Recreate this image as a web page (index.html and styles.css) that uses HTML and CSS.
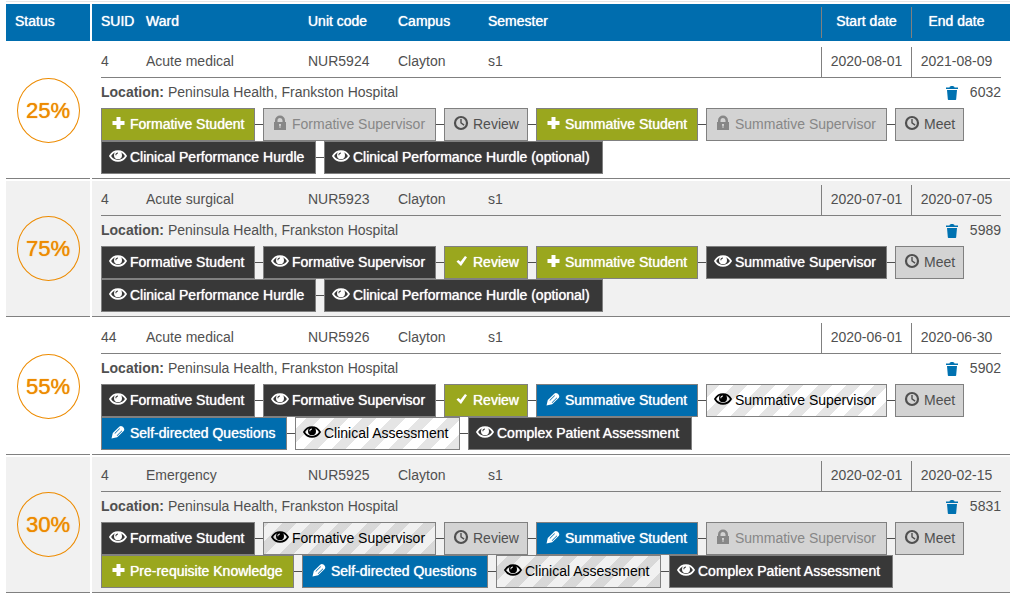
FILE: index.html
```html
<!DOCTYPE html>
<html lang="en">
<head>
<meta charset="utf-8">
<title>Placements</title>
<link rel="stylesheet" href="styles.css">
</head>
<body>
<svg class="sprite" aria-hidden="true">
  <symbol id="plus" viewBox="0 0 18 18"><path d="M7.500 3h4v4h4v4h-4v4h-4v-4h-4V7h4z"/></symbol>
  <symbol id="eye" viewBox="0 0 18 18"><path d="M1 9C3 5.600 5.700 4.200 9 4.200S15 5.600 17 9c-2 3.400-4.700 4.800-8 4.800S3 12.400 1 9z" fill="none" stroke="currentColor" stroke-width="1.800"/><path fill-rule="evenodd" d="M9 4.200a4 4 0 1 1 0 8 4 4 0 0 1 0-8zM6.400 8.200h1c0-1 .6-1.600 1.600-1.700v-1c-1.600 0-2.600 1.100-2.600 2.700z"/></symbol>
  <symbol id="lock" viewBox="0 0 18 18"><path fill-rule="evenodd" d="M3 8h1V6.500a5 5 0 0 1 10 0V8h1v8H3zm3.500 0h5V6.500a2.500 2.500 0 0 0-5 0zM8 10v1.500l.5.500V14h1v-2l.5-.5V10z"/></symbol>
  <symbol id="clock" viewBox="0 0 18 18"><circle cx="9" cy="9" r="6" fill="none" stroke="currentColor" stroke-width="2.200"/><path d="M8.300 5h1.400v3.600l2.800 2-.8 1.200-3.400-2.500z"/></symbol>
  <symbol id="check" viewBox="0 0 18 18"><path d="M4.500 9.500l1.800-1.600 2.200 1.900L13 4l2 1.300L9 14z"/></symbol>
  <symbol id="pen" viewBox="0 0 18 18"><path fill-rule="evenodd" d="M2.500 15.500l1.300-5.500L10.500 3.500c2-2 6.200 1.800 4.400 4.200L8.200 14.200zM6 10.800l5-5-.5-.5-5 5zm2.200 2.200l5-5-.5-.5-5 5z"/></symbol>
  <symbol id="bin" viewBox="0 0 12 14"><path d="M0 3V1.500h3.500C3.500.5 4.500 0 6 0s2.500.5 2.500 1.500H12V3zM1 4h10l-.8 9c0 .6-.4 1-1 1H2.800c-.6 0-1-.4-1-1z"/></symbol>
</svg>
<table class="placements">
  <thead>
    <tr>
      <th class="status-head">Status</th>
      <th class="main-head">
        <div class="columns">
          <span>SUID</span><span>Ward</span><span>Unit code</span><span>Campus</span><span>Semester</span>
          <span class="date">Start date</span><span class="date">End date</span>
        </div>
      </th>
    </tr>
  </thead>
  <tbody id="rows"></tbody>
</table>
<script src="app.js"></script>
</body>
</html>
```
FILE: styles.css
```css
* { box-sizing: border-box; }

body {
  margin: 0;
  padding: 1px 7px 0 4px;
  background: #fff;
  color: #505050;
  font: 14px/20px "Liberation Sans", Arial, sans-serif;
}

.sprite { position: absolute; width: 0; height: 0; }

.placements {
  width: 100%;
  padding-top: 1px;
  border-spacing: 2px;
  border-collapse: separate;
  table-layout: fixed;
  background: linear-gradient(#e6e6e6, #e6e6e6) 2px 0 / calc(100% - 4px) 1px no-repeat;
}

th, td { padding: 0; text-align: left; }

th {
  height: 37px;
  background: #006dae;
  color: #fff;
  font-weight: normal;
  text-shadow: 0 0 1px #fff;
}

.status-head { width: 84px; padding: 0 9px 3px; }
.main-head { padding: 3px 9px; }

.columns {
  display: grid;
  grid-template-columns: 5fr 18fr 10fr 10fr 37fr 10fr 10fr;
}

.columns > span { padding: 4px 0 6px; line-height: 20px; white-space: nowrap; }
.main-head .columns > span { padding: 4px 0 7px; }
.columns > .date { border-left: 1px solid gray; text-align: center; }

td { border-bottom: 1px solid gray; }
.main { padding: 4px 9px; }
.main .columns { border-bottom: 1px solid gray; }
tbody tr:nth-child(even) td { background: #f1f1f1; }

.ring {
  display: grid;
  place-items: center;
  width: 63px;
  height: 65px;
  margin: 0 auto;
  border: 1px solid #ed8b00;
  border-radius: 50%;
  color: #ed8b00;
  font-size: 22px;
  text-shadow: 0 0 1px #ed8b00;
}

.place { display: flex; align-items: center; height: 30px; padding-bottom: 2px; }
.remove { display: flex; margin: 2px 12px 0 auto; padding: 0; border: 0; background: none; color: #0072b1; cursor: pointer; }
.remove svg { width: 12px; height: 14px; fill: currentColor; }

.steps { display: flex; flex-wrap: wrap; column-gap: 8px; }

.step {
  position: relative;
  display: flex;
  align-items: center;
  gap: 3px;
  height: 33px;
  padding: 0 0 2px 7px;
  border: 1px solid gray;
  font: inherit;
  white-space: nowrap;
  cursor: pointer;
}

.step svg { width: 18px; height: 18px; margin-bottom: 2px; flex: none; fill: currentColor; }

.step.linked::after {
  content: "";
  position: absolute;
  top: 15px;
  left: 100%;
  width: 8px;
  margin-left: 1px;
  border-top: 1px solid #505050;
}

.todo { background: #9aa71e; color: #fff; text-shadow: 0 0 1px #fff; }
.view { background: #383838; color: #fff; text-shadow: 0 0 1px #fff; }
.edit { background: #006dae; color: #fff; text-shadow: 0 0 1px #fff; }
.wait { background: #d3d3d3; color: #505050; }
.locked { background: #d3d3d3; color: #878787; }
.draft {
  background: repeating-linear-gradient(-45deg, rgba(0, 0, 0, .1) 0 10px, transparent 10px 20px);
  color: #000;
}

.w-formative-student { width: 154px; }
.w-formative-supervisor { width: 173px; }
.w-review { width: 84px; }
.w-summative-student { width: 162px; }
.w-summative-supervisor { width: 181px; }
.w-meet { width: 69px; }
.w-hurdle { width: 215px; }
.w-hurdle-optional { width: 279px; }
.w-questions { width: 186px; }
.w-clinical { width: 165px; }
.w-complex { width: 224px; }
.w-knowledge { width: 193px; }
```
FILE: app.js
```js
const labels = {
  'formative-student': 'Formative Student',
  'formative-supervisor': 'Formative Supervisor',
  'review': 'Review',
  'summative-student': 'Summative Student',
  'summative-supervisor': 'Summative Supervisor',
  'meet': 'Meet',
  'hurdle': 'Clinical Performance Hurdle',
  'hurdle-optional': 'Clinical Performance Hurdle (optional)',
  'questions': 'Self-directed Questions',
  'clinical': 'Clinical Assessment',
  'complex': 'Complex Patient Assessment',
  'knowledge': 'Pre-requisite Knowledge'
};
const core = ['formative-student', 'formative-supervisor', 'review', 'summative-student', 'summative-supervisor', 'meet'];
const hurdles = ['hurdle', 'hurdle-optional'];

const placements = [
  { pct: 25, cells: ['4', 'Acute medical', 'NUR5924', 'Clayton', 's1', '2020-08-01', '2021-08-09'], id: 6032,
    steps: [...core, ...hurdles],
    states: ['todo plus', 'locked lock', 'wait clock', 'todo plus', 'locked lock', 'wait clock', 'view eye', 'view eye'] },
  { pct: 75, cells: ['4', 'Acute surgical', 'NUR5923', 'Clayton', 's1', '2020-07-01', '2020-07-05'], id: 5989,
    steps: [...core, ...hurdles],
    states: ['view eye', 'view eye', 'todo check', 'todo plus', 'view eye', 'wait clock', 'view eye', 'view eye'] },
  { pct: 55, cells: ['44', 'Acute medical', 'NUR5926', 'Clayton', 's1', '2020-06-01', '2020-06-30'], id: 5902,
    steps: [...core, 'questions', 'clinical', 'complex'],
    states: ['view eye', 'view eye', 'todo check', 'edit pen', 'draft eye', 'wait clock', 'edit pen', 'draft eye', 'view eye'] },
  { pct: 30, cells: ['4', 'Emergency', 'NUR5925', 'Clayton', 's1', '2020-02-01', '2020-02-15'], id: 5831,
    steps: [...core, 'knowledge', 'questions', 'clinical', 'complex'],
    states: ['view eye', 'draft eye', 'wait clock', 'edit pen', 'locked lock', 'wait clock', 'todo plus', 'edit pen', 'draft eye', 'view eye'] }
];

const icon = name => `<svg aria-hidden="true"><use href="#${name}"/></svg>`;

const step = (kind, i, row) => {
  const [state, glyph] = row.states[i].split(' ');
  const linked = kind !== 'meet' && i < row.steps.length - 1 ? ' linked' : '';
  return `<button type="button" class="step ${state} w-${kind}${linked}">${icon(glyph)}<span>${labels[kind]}</span></button>`;
};

document.getElementById('rows').innerHTML = placements.map(row => `
  <tr>
    <td><div class="ring">${row.pct}%</div></td>
    <td class="main">
      <div class="columns">${row.cells.map((c, i) => `<span${i > 4 ? ' class="date"' : ''}>${c}</span>`).join('')}</div>
      <div class="place">
        <span><b>Location:</b> Peninsula Health, Frankston Hospital</span>
        <button type="button" class="remove" aria-label="Delete ${row.id}">${icon('bin')}</button>
        <span>${row.id}</span>
      </div>
      <div class="steps">${row.steps.map((kind, i) => step(kind, i, row)).join('')}</div>
    </td>
  </tr>`).join('');
```
